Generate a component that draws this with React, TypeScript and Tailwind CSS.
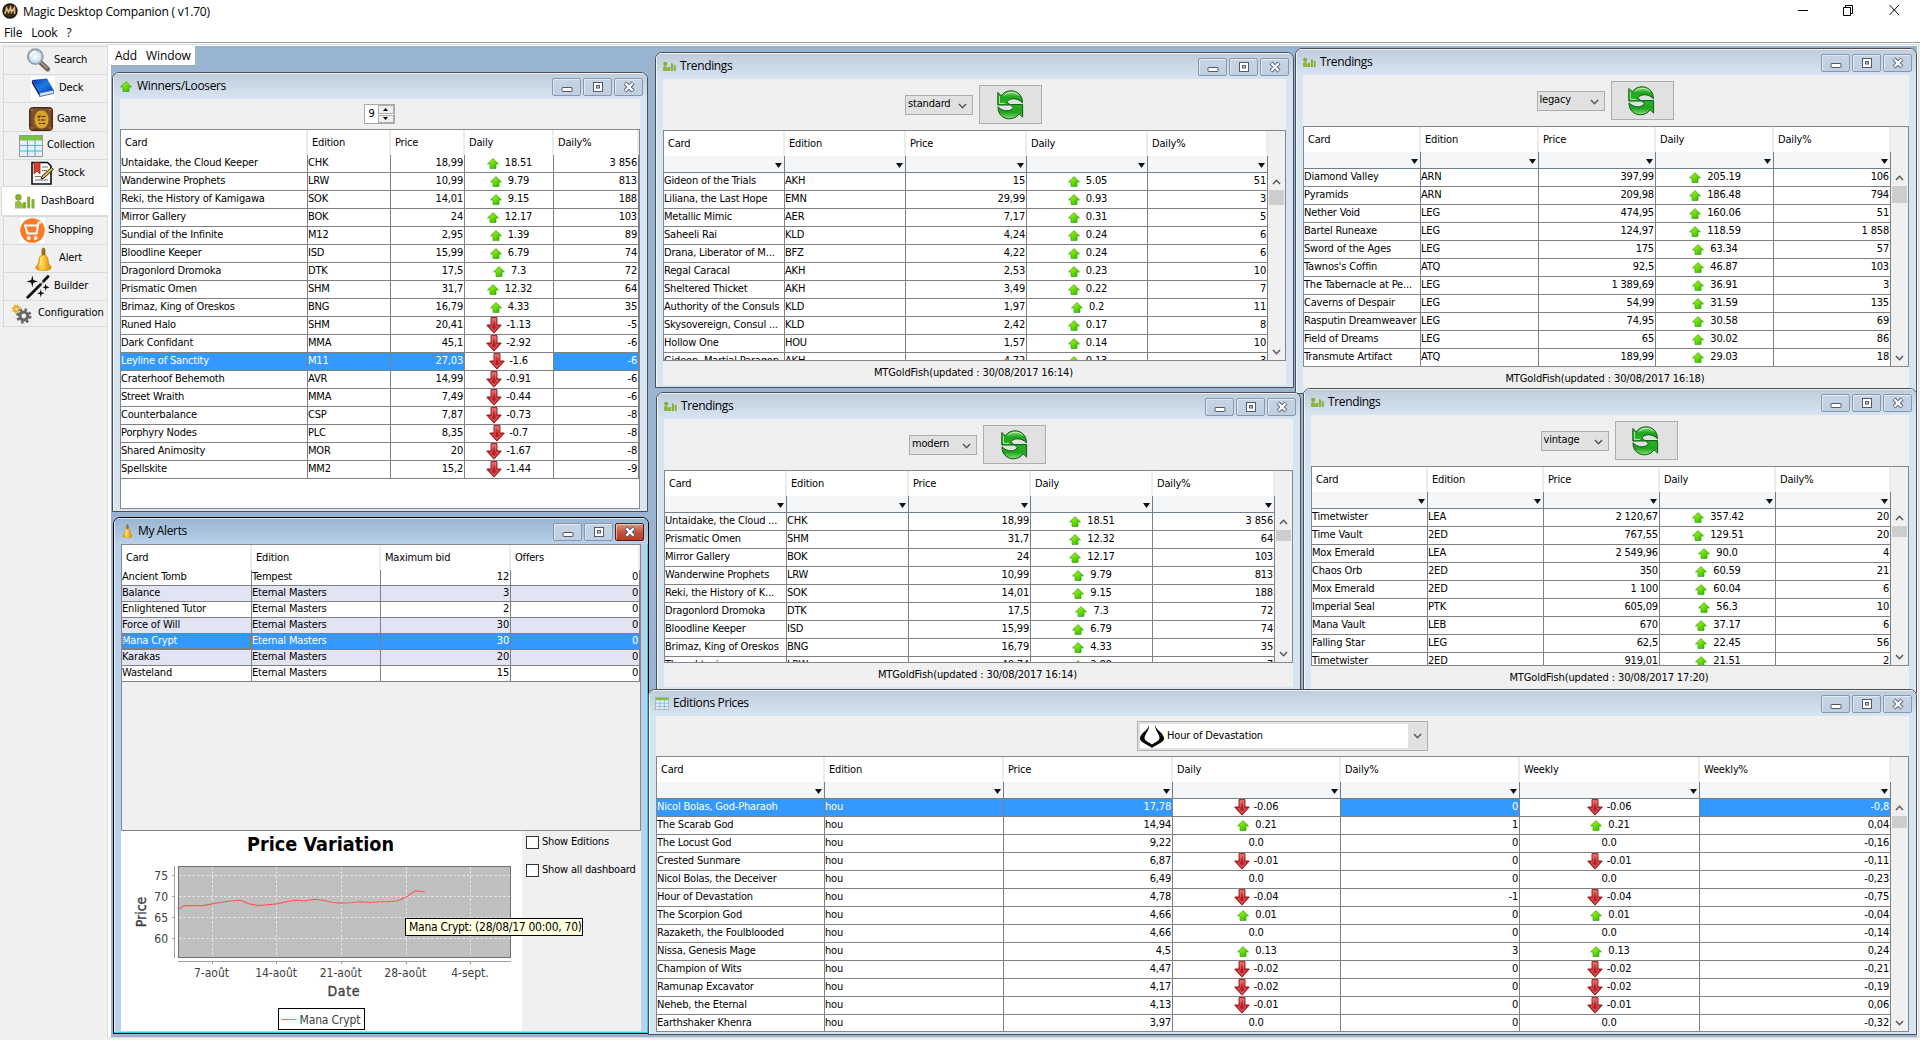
import React from "react";

type Row = string[];

const TAHOMA = "font-['DejaVu_Sans_Condensed','DejaVu_Sans',sans-serif] tracking-[-0.18px]";
const SEGOE = "font-['Open_Sans','Noto_Sans',sans-serif]";

/* ---------- shared gradients ---------- */

function Defs() {
  return (
    <svg className="absolute h-0 w-0" aria-hidden="true">
      <defs>
        <linearGradient id="up" x1="0" y1="0" x2="1" y2="1">
          <stop offset="0" stopColor="#b6f02c" />
          <stop offset="0.5" stopColor="#6fdc05" />
          <stop offset="1" stopColor="#1fae0a" />
        </linearGradient>
        <linearGradient id="down" x1="0" y1="0" x2="0" y2="1">
          <stop offset="0" stopColor="#f07a78" />
          <stop offset="0.5" stopColor="#b3151a" />
          <stop offset="1" stopColor="#c9474a" />
        </linearGradient>
        <linearGradient id="swirl" x1="0" y1="0" x2="0" y2="1">
          <stop offset="0" stopColor="#8edd7a" />
          <stop offset="0.45" stopColor="#1fa51f" />
          <stop offset="1" stopColor="#27b41f" />
        </linearGradient>
        <linearGradient id="book" x1="0" y1="0" x2="1" y2="1">
          <stop offset="0" stopColor="#0b2f9c" />
          <stop offset="0.5" stopColor="#1e7be6" />
          <stop offset="1" stopColor="#0a3cb0" />
        </linearGradient>
        <linearGradient id="gold" x1="0" y1="0" x2="1" y2="0">
          <stop offset="0" stopColor="#f08a00" />
          <stop offset="0.4" stopColor="#ffd84a" />
          <stop offset="1" stopColor="#d98200" />
        </linearGradient>
        <radialGradient id="lens">
          <stop offset="0" stopColor="#ffffff" />
          <stop offset="1" stopColor="#b5d8f3" />
        </radialGradient>
      </defs>
    </svg>
  );
}

/* ---------- icons ---------- */

const UpArrow = () => (
  <svg viewBox="0 0 12 11" className="h-[11px] w-3 shrink-0">
    <path d="M6 .6 11.5 5.9 H9 V10.4 H3 V5.9 H.5Z" fill="url(#up)" stroke="#2fa50d" strokeWidth=".7" />
  </svg>
);

const DownArrow = () => (
  <svg viewBox="0 0 16 17" className="h-[17px] w-4 shrink-0">
    <path d="M5 .6 H11 V8 H15.3 L8 16.2 .7 8 H5Z" fill="url(#down)" stroke="#a01d22" strokeWidth="1" />
    <path d="M6.3 2 V9.3 H4 L8 14 12 9.3 H9.7 V2" fill="none" stroke="#e88684" strokeWidth=".6" />
  </svg>
);

const BarsIcon = ({ className }: { className: string }) => (
  <svg viewBox="0 0 20 15" className={className}>
    <g fill="#86ae2f">
      <circle cx="3.4" cy="3.2" r="3.2" />
      <path d="M0 8 4 6 8 10 V14.5 H0Z" opacity=".85" />
      <rect x="8" y="8" width="3" height="6.5" rx="1" />
      <rect x="12.2" y="2.5" width="3" height="12" rx="1" />
      <rect x="16.5" y="5" width="3" height="9.5" rx="1" />
    </g>
  </svg>
);

const TableIcon = ({ className }: { className: string }) => (
  <svg viewBox="0 0 24 22" className={className} preserveAspectRatio="none">
    <rect x=".5" y=".5" width="23" height="21" fill="#e9eef2" stroke="#93999e" />
    <rect x="1" y="1" width="22" height="4.5" fill="#79c143" />
    <path d="M1 10.5H23 M1 16H23 M8.5 5.5V21 M16 5.5V21" stroke="#4db2e6" strokeWidth="1.1" />
  </svg>
);

const BellIcon = ({ className }: { className: string }) => (
  <svg viewBox="0 0 17 24" className={className}>
    <path d="M8.5 1 C10 1 10.3 3 10 8 H7 C6.7 3 7 1 8.5 1Z" fill="#a87412" stroke="#6e4a08" strokeWidth=".6" />
    <path d="M8.5 8 C4 8 4 12 3.6 15.5 C3.3 18 1 18.6 .8 20.4 C.8 22.6 4 23.4 8.5 23.4 S16.2 22.6 16.2 20.4 C16 18.6 13.7 18 13.4 15.5 C13 12 13 8 8.5 8Z" fill="url(#gold)" stroke="#b87400" strokeWidth=".6" />
    <path d="M6.4 11 C5.8 14 6 17 4.5 19" stroke="#fff3b0" strokeWidth="1.2" fill="none" />
  </svg>
);

const SearchIcon = () => (
  <svg viewBox="0 0 24 24" className="size-6">
    <path d="M14.5 14.5 21.5 21" stroke="#6d675f" strokeWidth="5" strokeLinecap="round" />
    <path d="M14.5 14 21 20" stroke="#a59d92" strokeWidth="1.6" strokeLinecap="round" />
    <circle cx="9.3" cy="8.6" r="7.4" fill="url(#lens)" stroke="#9aa0a6" strokeWidth="2" />
    <path d="M4.5 8 A5 5 0 0 1 9.5 3.6" stroke="#fff" strokeWidth="1.6" fill="none" />
  </svg>
);

const DeckIcon = () => (
  <svg viewBox="0 0 24 24" className="size-6">
    <rect width="24" height="24" fill="#fff" />
    <path d="M1 4 L16 2.6 22.6 14 8.6 17Z" fill="url(#book)" />
    <path d="M1 4 8.6 17 V20.5 L.8 7Z" fill="#08256f" />
    <path d="M8.6 17 22.6 14 V17.4 L8.6 20.6Z" fill="#d7e2f2" stroke="#123a9e" strokeWidth=".7" />
  </svg>
);

const GameIcon = () => (
  <svg viewBox="0 0 24 24" className="size-6">
    <rect x=".5" y=".5" width="23" height="23" rx="3" fill="#6b4326" stroke="#44290f" />
    <rect x="2.5" y="2" width="19" height="19" rx="2" fill="#7d5233" />
    <ellipse cx="12.5" cy="12.5" rx="7.5" ry="9.5" fill="#d9a52c" stroke="#8a5f14" />
    <path d="M8.5 9 10 10.4 11.4 8.4 M12.5 9.5H16.5 M9 13H11 M12 13H16 M10 16.5H12 M13 16.5H16" stroke="#3d270c" strokeWidth="1.2" fill="none" />
    <g fill="#e0662a">
      <circle cx="3" cy="3" r="1" />
      <circle cx="21" cy="3" r="1" />
      <circle cx="3" cy="21" r="1" />
      <circle cx="21" cy="21" r="1" />
    </g>
  </svg>
);

const StockIcon = () => (
  <svg viewBox="0 0 24 24" className="size-6">
    <path d="M2 1.5 H17.5 L21 5 V23 H2Z" fill="#f7f7f7" stroke="#111" strokeWidth="1.6" />
    <path d="M4 1.5 H10 V13 L7 10 4 13Z" fill="#d8452f" stroke="#8c1f12" strokeWidth=".7" />
    <path d="M12 6H18 M12 9.5H17 M5 15.5H11 M5 19H18" stroke="#777" strokeWidth="1" />
    <path d="M21.5 6.5 23.2 8.5 14 17 11.2 18 12 15.2Z" fill="#f2c23c" stroke="#111" strokeWidth="1" />
  </svg>
);

const CartIcon = () => (
  <svg viewBox="0 0 25 25" className="size-[25px] shrink-0">
    <rect width="25" height="25" fill="#fff" />
    <circle cx="12.5" cy="12.5" r="12.3" fill="#fb7a28" />
    <path d="M21 4.5 H18.5 L16.6 15.5 H7.5 L5 7.5 H17.5" fill="none" stroke="#fff" strokeWidth="2" strokeLinejoin="round" />
    <circle cx="8.8" cy="20" r="1.9" fill="#fff" />
    <circle cx="15.6" cy="20" r="1.9" fill="#fff" />
  </svg>
);

const WandIcon = () => (
  <svg viewBox="0 0 24 24" className="size-6">
    <path d="M1.8 22.2 14.5 9.5" stroke="#111" strokeWidth="2.8" strokeLinecap="round" />
    <path d="M17.5 6.2 22 1.6" stroke="#111" strokeWidth="2.8" strokeLinecap="round" />
    <path d="M15 9 17.2 6.6" stroke="#888" strokeWidth="1.6" />
    <path d="M6.3 .4 7.4 5 12 6.5 7.4 7.8 6.3 12.6 5.2 7.8 .6 6.5 5.2 5Z" fill="#111" />
    <path d="M19.8 8.5 20.5 11.3 23.8 12.3 20.5 13.2 19.8 16 19 13.2 16.4 12.3 19 11.3Z" fill="#111" />
    <path d="M14.8 14 15.6 17.2 18.8 18.2 15.6 19.2 14.8 22.6 14 19.2 11 18.2 14 17.2Z" fill="#111" />
  </svg>
);

const GearsIcon = () => (
  <svg viewBox="0 0 24 24" className="size-6">
    <circle cx="6.5" cy="7" r="2.3" fill="none" stroke="#f0a81c" strokeWidth="2" />
    <circle cx="6.5" cy="7" r="3.9" fill="none" stroke="#f0a81c" strokeWidth="1.4" strokeDasharray="1.55 1.51" />
    <circle cx="13.8" cy="14" r="4" fill="none" stroke="#686868" strokeWidth="3.2" />
    <circle cx="13.8" cy="14" r="6.4" fill="none" stroke="#686868" strokeWidth="2.6" strokeDasharray="2.5 2.526" />
  </svg>
);

const SWOOSH = "M.8 2.5 V15 H13.2 L10 11.8 C12.6 7.8 20.5 7.4 25.4 12.8 C25.6 5 20 .8 14 .8 C10 .8 6.5 2.6 4.3 5.8Z";

const RefreshIcon = () => (
  <svg viewBox="0 0 27 30" className="h-[30px] w-[27px]">
    <g fill="url(#swirl)" stroke="#0b5a14" strokeWidth="1" strokeLinejoin="round">
      <path d={SWOOSH} />
      <path d={SWOOSH} transform="rotate(180 13.2 14.8)" />
    </g>
    <path d="M2.4 6 V13.4 H8 M7 5.6 C10 1.6 18 1.4 22 5.4" stroke="#d9f7cf" strokeWidth="1" fill="none" opacity=".8" />
  </svg>
);

const SetIcon = () => (
  <svg viewBox="0 0 24 24" className="size-6 shrink-0">
    <path d="M9 .5 C9 6 0 9 0 14.5 C0 18.5 7 20 12 24 C17 20 24 18.5 24 14.5 C24 9 15.5 6 15 .5 C14.6 6 19.5 10 19.5 14 C19.5 17 15 18 12 20.5 C9 18 4.5 17 4.5 14 C4.5 10 10 6 9 .5Z" fill="#050505" />
  </svg>
);

const Chevron = ({ up = false, className = "" }: { up?: boolean; className?: string }) => (
  <svg viewBox="0 0 9 6" className={`h-1.5 w-[9px] ${className}`}>
    <path d={up ? "M1 5 4.5 1.2 8 5" : "M1 1 4.5 4.8 8 1"} fill="none" stroke="#555" strokeWidth={1.4} />
  </svg>
);

/* ---------- window frame ---------- */

function CaptionButton({ kind, hot }: { kind: "min" | "max" | "close"; hot?: boolean }) {
  return (
    <div
      className={`flex h-[18px] w-[29px] items-center justify-center rounded-[2px] border shadow-[inset_1px_1px_0_rgba(255,255,255,.5)] ${
        hot ? "border-[#5c1a18] bg-linear-to-b from-[#dd9487] via-[#c4543f] to-[#b83a22]" : "border-[#8598b0] bg-linear-to-b from-[#c6d4e3] to-[#bfd0e2]"
      }`}
    >
      <svg viewBox="0 0 12 12" className="size-3">
        {kind === "min" && <rect x="1" y="6.5" width="10" height="4" rx=".5" fill="#fff" stroke="#54586b" />}
        {kind === "max" && (
          <>
            <rect x="1.5" y="1.5" width="9" height="9" fill="#fff" stroke="#54586b" />
            <rect x="4.5" y="4.5" width="3" height="2.5" fill="#c6d4e3" stroke="#54586b" />
          </>
        )}
        {kind === "close" && (
          <>
            <path d="M2 2 10 10 M10 2 2 10" stroke="#54586b" strokeWidth="4" />
            <path d="M2.4 2.4 9.6 9.6 M9.6 2.4 2.4 9.6" stroke="#fff" strokeWidth="2.2" />
          </>
        )}
      </svg>
    </div>
  );
}

function Frame({
  place,
  title,
  icon,
  active,
  children,
}: {
  place: string;
  title: string;
  icon: React.ReactNode;
  active?: boolean;
  children: React.ReactNode;
}) {
  return (
    <section
      className={`absolute flex flex-col overflow-hidden rounded-t-[7px] border ${place} ${
        active
          ? "border-black bg-[#b9d1ea] shadow-[inset_-1px_-1px_0_#25cfe8,inset_1px_1px_0_#e8f2fb]"
          : "border-[#4b4e53] bg-[#d7e4f2] shadow-[inset_1px_1px_0_#f4f8fc]"
      }`}
    >
      <header
        className={`flex h-[26px] shrink-0 items-center bg-linear-to-b pr-1 pl-[5px] shadow-[inset_1px_1px_0_rgba(255,255,255,.7)] ${
          active ? "from-[#99b4d1] to-[#b9d1ea]" : "from-[#bfcddb] to-[#d7e4f2]"
        }`}
      >
        <span className="flex w-4 items-center justify-center">{icon}</span>
        <span className={`pb-px pl-[3px] text-[12px] tracking-[-0.36px] ${SEGOE}`}>{title}</span>
        <span className="ml-auto flex gap-0.5 pt-0.5">
          <CaptionButton kind="min" />
          <CaptionButton kind="max" />
          <CaptionButton kind="close" hot={active} />
        </span>
      </header>
      <div className="mx-[7px] mb-0.5 flex min-h-0 grow flex-col bg-[#f0f0f0]">{children}</div>
    </section>
  );
}

/* ---------- tables ---------- */

function Delta({ value }: { value: string }) {
  const flat = value === "0.0";
  return (
    <span className="flex grow items-center justify-center gap-1">
      {!flat && <span className="flex w-4 justify-center">{value.startsWith("-") ? <DownArrow /> : <UpArrow />}</span>}
      <span className="pb-px">{value}</span>
    </span>
  );
}

function Grid({
  cols,
  head,
  rows,
  selected = -1,
  filter,
  thumb,
  striped,
  focus,
  className,
}: {
  cols: string;
  head: string[];
  rows: Row[];
  selected?: number;
  filter?: boolean;
  thumb?: string;
  striped?: boolean;
  focus?: boolean;
  className: string;
}) {
  const isDelta = (i: number) => head[i] === "Daily" || head[i] === "Weekly";
  return (
    <div className={`flex overflow-hidden border border-[#828790] text-[11px] whitespace-nowrap ${className}`}>
      <div className="flex shrink-0 flex-col">
        <div className={`grid h-[25px] shrink-0 bg-white ${cols}`}>
          {head.map((h) => (
            <div key={h} className="border-r-2 border-b border-[#ececec] pl-1 leading-[25px]">
              {h}
            </div>
          ))}
        </div>
        {filter && (
          <div className={`grid h-[17px] shrink-0 bg-[#f5f6f7] ${cols}`}>
            {head.map((h) => (
              <div key={h} className="flex items-end justify-end border-r border-b border-[#6f7f8c] pr-0.5 pb-1">
                <svg viewBox="0 0 7 5" className="h-[5px] w-[7px]">
                  <path d="M0 0H7L3.5 5Z" fill="#111" />
                </svg>
              </div>
            ))}
          </div>
        )}
        {rows.map((row, r) => (
          <div key={r} className={`grid shrink-0 ${striped ? "h-4 leading-[14px]" : "h-[18px] leading-4"} ${cols}`}>
            {row.map((cell, c) => {
              const picked = r === selected && !isDelta(c);
              return (
                <div
                  key={c}
                  className={`flex overflow-hidden border-r border-b border-[#808080] pr-px ${
                    picked ? "bg-[#3399ff] text-white" : striped && r % 2 ? "bg-[#e0e4f3]" : "bg-white"
                  } ${c > 1 && !isDelta(c) ? "justify-end" : ""} ${focus && picked && c === 0 ? "outline-1 -outline-offset-2 outline-dotted outline-[#cc6600]" : ""}`}
                >
                  {isDelta(c) ? <Delta value={cell} /> : cell}
                </div>
              );
            })}
          </div>
        ))}
      </div>
      {thumb && (
        <div className="flex w-[17px] shrink-0 flex-col pt-[42px]">
          <div className="flex h-[17px] shrink-0 items-center justify-center">
            <Chevron up />
          </div>
          <div className={`w-[15px] self-center bg-[#cdcdcd] ${thumb}`} />
          <div className="mt-auto flex h-[17px] items-center justify-center">
            <Chevron />
          </div>
        </div>
      )}
    </div>
  );
}

function Trending({
  place,
  format,
  cols,
  rows,
  thumb,
  stamp,
  tableHeight,
}: {
  place: string;
  format: string;
  cols: string;
  rows: Row[];
  thumb: string;
  stamp: string;
  tableHeight: string;
}) {
  return (
    <Frame place={place} title="Trendings" icon={<BarsIcon className="h-[11px] w-[13px]" />}>
      <div className="flex h-[51px] shrink-0 items-center justify-center gap-1.5 pr-0.5">
        <div className="flex h-5 w-[68px] items-center justify-between border border-[#adadad] bg-[#e1e1e1] pr-[5px] pl-0.5 text-[11px]">
          <span className="pb-px">{format}</span>
          <Chevron className="mt-0.5" />
        </div>
        <div className="flex h-[39px] w-[63px] items-center justify-center border border-[#adadad] bg-[#e1e1e1] pr-px">
          <RefreshIcon />
        </div>
      </div>
      <Grid className={`shrink-0 ${tableHeight}`} cols={cols} head={HEAD5} rows={rows} filter thumb={thumb} />
      <div className="flex h-6 shrink-0 items-center justify-center pr-0.5 text-[11px] tracking-[-0.12px]">MTGoldFish(updated : {stamp})</div>
    </Frame>
  );
}

/* ---------- data ---------- */

const HEAD5 = ["Card", "Edition", "Price", "Daily", "Daily%"];

const WINNERS: Row[] = [
  ["Untaidake, the Cloud Keeper", "CHK", "18,99", "18.51", "3 856"],
  ["Wanderwine Prophets", "LRW", "10,99", "9.79", "813"],
  ["Reki, the History of Kamigawa", "SOK", "14,01", "9.15", "188"],
  ["Mirror Gallery", "BOK", "24", "12.17", "103"],
  ["Sundial of the Infinite", "M12", "2,95", "1.39", "89"],
  ["Bloodline Keeper", "ISD", "15,99", "6.79", "74"],
  ["Dragonlord Dromoka", "DTK", "17,5", "7.3", "72"],
  ["Prismatic Omen", "SHM", "31,7", "12.32", "64"],
  ["Brimaz, King of Oreskos", "BNG", "16,79", "4.33", "35"],
  ["Runed Halo", "SHM", "20,41", "-1.13", "-5"],
  ["Dark Confidant", "MMA", "45,1", "-2.92", "-6"],
  ["Leyline of Sanctity", "M11", "27,03", "-1.6", "-6"],
  ["Craterhoof Behemoth", "AVR", "14,99", "-0.91", "-6"],
  ["Street Wraith", "MMA", "7,49", "-0.44", "-6"],
  ["Counterbalance", "CSP", "7,87", "-0.73", "-8"],
  ["Porphyry Nodes", "PLC", "8,35", "-0.7", "-8"],
  ["Shared Animosity", "MOR", "20", "-1.67", "-8"],
  ["Spellskite", "MM2", "15,2", "-1.44", "-9"],
];

const ALERTS: Row[] = [
  ["Ancient Tomb", "Tempest", "12", "0"],
  ["Balance", "Eternal Masters", "3", "0"],
  ["Enlightened Tutor", "Eternal Masters", "2", "0"],
  ["Force of Will", "Eternal Masters", "30", "0"],
  ["Mana Crypt", "Eternal Masters", "30", "0"],
  ["Karakas", "Eternal Masters", "20", "0"],
  ["Wasteland", "Eternal Masters", "15", "0"],
];

const STANDARD: Row[] = [
  ["Gideon of the Trials", "AKH", "15", "5.05", "51"],
  ["Liliana, the Last Hope", "EMN", "29,99", "0.93", "3"],
  ["Metallic Mimic", "AER", "7,17", "0.31", "5"],
  ["Saheeli Rai", "KLD", "4,24", "0.24", "6"],
  ["Drana, Liberator of M...", "BFZ", "4,22", "0.24", "6"],
  ["Regal Caracal", "AKH", "2,53", "0.23", "10"],
  ["Sheltered Thicket", "AKH", "3,49", "0.22", "7"],
  ["Authority of the Consuls", "KLD", "1,97", "0.2", "11"],
  ["Skysovereign, Consul ...", "KLD", "2,42", "0.17", "8"],
  ["Hollow One", "HOU", "1,57", "0.14", "10"],
  ["Gideon, Martial Paragon", "AKH", "4,72", "0.13", "3"],
];

const LEGACY: Row[] = [
  ["Diamond Valley", "ARN", "397,99", "205.19", "106"],
  ["Pyramids", "ARN", "209,98", "186.48", "794"],
  ["Nether Void", "LEG", "474,95", "160.06", "51"],
  ["Bartel Runeaxe", "LEG", "124,97", "118.59", "1 858"],
  ["Sword of the Ages", "LEG", "175", "63.34", "57"],
  ["Tawnos's Coffin", "ATQ", "92,5", "46.87", "103"],
  ["The Tabernacle at Pe...", "LEG", "1 389,69", "36.91", "3"],
  ["Caverns of Despair", "LEG", "54,99", "31.59", "135"],
  ["Rasputin Dreamweaver", "LEG", "74,95", "30.58", "69"],
  ["Field of Dreams", "LEG", "65", "30.02", "86"],
  ["Transmute Artifact", "ATQ", "189,99", "29.03", "18"],
];

const MODERN: Row[] = [
  ["Untaidake, the Cloud ...", "CHK", "18,99", "18.51", "3 856"],
  ["Prismatic Omen", "SHM", "31,7", "12.32", "64"],
  ["Mirror Gallery", "BOK", "24", "12.17", "103"],
  ["Wanderwine Prophets", "LRW", "10,99", "9.79", "813"],
  ["Reki, the History of K...", "SOK", "14,01", "9.15", "188"],
  ["Dragonlord Dromoka", "DTK", "17,5", "7.3", "72"],
  ["Bloodline Keeper", "ISD", "15,99", "6.79", "74"],
  ["Brimaz, King of Oreskos", "BNG", "16,79", "4.33", "35"],
  ["Thoughtseize", "LRW", "40,74", "2.88", "7"],
];

const VINTAGE: Row[] = [
  ["Timetwister", "LEA", "2 120,67", "357.42", "20"],
  ["Time Vault", "2ED", "767,55", "129.51", "20"],
  ["Mox Emerald", "LEA", "2 549,96", "90.0", "4"],
  ["Chaos Orb", "2ED", "350", "60.59", "21"],
  ["Mox Emerald", "2ED", "1 100", "60.04", "6"],
  ["Imperial Seal", "PTK", "605,09", "56.3", "10"],
  ["Mana Vault", "LEB", "670", "37.17", "6"],
  ["Falling Star", "LEG", "62,5", "22.45", "56"],
  ["Timetwister", "2ED", "919,01", "21.51", "2"],
];

const EDITIONS: Row[] = [
  ["Nicol Bolas, God-Pharaoh", "hou", "17,78", "-0.06", "0", "-0.06", "-0,8"],
  ["The Scarab God", "hou", "14,94", "0.21", "1", "0.21", "0,04"],
  ["The Locust God", "hou", "9,22", "0.0", "0", "0.0", "-0,16"],
  ["Crested Sunmare", "hou", "6,87", "-0.01", "0", "-0.01", "-0,11"],
  ["Nicol Bolas, the Deceiver", "hou", "6,49", "0.0", "0", "0.0", "-0,23"],
  ["Hour of Devastation", "hou", "4,78", "-0.04", "-1", "-0.04", "-0,75"],
  ["The Scorpion God", "hou", "4,66", "0.01", "0", "0.01", "-0,04"],
  ["Razaketh, the Foulblooded", "hou", "4,66", "0.0", "0", "0.0", "-0,14"],
  ["Nissa, Genesis Mage", "hou", "4,5", "0.13", "3", "0.13", "0,24"],
  ["Champion of Wits", "hou", "4,47", "-0.02", "0", "-0.02", "-0,21"],
  ["Ramunap Excavator", "hou", "4,17", "-0.02", "0", "-0.02", "-0,19"],
  ["Neheb, the Eternal", "hou", "4,13", "-0.01", "0", "-0.01", "0,06"],
  ["Earthshaker Khenra", "hou", "3,97", "0.0", "0", "0.0", "-0,32"],
];

/* Daily prices starting on 3 August. */
const PRICES = [
  66.6, 67.9, 67.9, 67.9, 68.3, 68.7, 69, 69.2, 68.3, 67.9, 68.1, 68.3, 68.8, 69.2, 69, 69.4, 69.2, 68.65, 68.5, 68.6,
  68.8, 68.65, 68.8, 68.8, 69, 70, 71.4, 71.2,
];

/* ---------- price chart ---------- */

function PriceChart() {
  const points = PRICES.map((p, i) => `${(54.2 + i * 9.25).toFixed(1)},${(65.8 - (p - 70) * 4.2).toFixed(1)}`).join(" ");
  return (
    <svg viewBox="0 0 401 200" className="h-[200px] w-[401px] shrink-0 bg-white tracking-normal" fill="#404040">
      <text x="199.5" y="20" textAnchor="middle" fontSize="19" fontWeight="700" fill="#000" textLength="147" lengthAdjust="spacingAndGlyphs">
        Price Variation
      </text>
      <rect x="57.5" y="35.5" width="332" height="91" fill="#c0c0c0" stroke="#707070" />
      <g stroke="#e6e6e6" strokeDasharray="2.5 2">
        {[44.5, 65.5, 86.5, 107.5].map((y) => (
          <path key={y} d={`M58 ${y}H389`} />
        ))}
        {[91.5, 155.5, 220.5, 285.5, 349.5].map((x) => (
          <path key={x} d={`M${x} 36V126`} />
        ))}
      </g>
      <path d="M53.5 35V127 M57 130.5H390 M51 44.5H53 M51 65.5H53 M51 86.5H53 M51 107.5H53 M91.5 131V133 M155.5 131V133 M220.5 131V133 M285.5 131V133 M349.5 131V133" stroke="#a0a0a0" fill="none" />
      <clipPath id="plot">
        <rect x="58" y="36" width="331" height="90" />
      </clipPath>
      <polyline points={points} clipPath="url(#plot)" fill="none" stroke="#ff5555" strokeWidth="1.1" />
      <g fontSize="12">
        {["75", "70", "65", "60"].map((t, i) => (
          <text key={t} x="47" y={48.5 + i * 21} textAnchor="end">
            {t}
          </text>
        ))}
        {["7-août", "14-août", "21-août", "28-août", "4-sept."].map((t, i) => (
          <text key={t} x={90.5 + i * 64.6} y="145.5" textAnchor="middle">
            {t}
          </text>
        ))}
      </g>
      <g fontSize="14" stroke="#404040" strokeWidth=".35">
        <text x="222.5" y="164.5" textAnchor="middle" textLength="32">
          Date
        </text>
        <text transform="translate(25 81) rotate(-90)" textAnchor="middle">
          Price
        </text>
      </g>
      <rect x="157.5" y="177.5" width="86" height="21" fill="#fff" stroke="#000" />
      <path d="M160.5 188.5H175.5" stroke="#ff6b6b" />
      <text x="178.5" y="192.5" fontSize="12" textLength="61">
        Mana Crypt
      </text>
    </svg>
  );
}

/* ---------- side tabs ---------- */

const TABS: { label: string; icon: React.ReactNode; box: string }[] = [
  { label: "Search", icon: <SearchIcon />, box: "h-[28px] pl-[22px] pb-px" },
  { label: "Deck", icon: <DeckIcon />, box: "h-[28px] pl-[27px] pb-px" },
  { label: "Game", icon: <GameIcon />, box: "h-[29px] pl-[25px] pt-1" },
  { label: "Collection", icon: <TableIcon className="h-[22px] w-6" />, box: "h-[28px] pl-[15px]" },
  { label: "Stock", icon: <StockIcon />, box: "h-[27px] pl-[26px]" },
  { label: "DashBoard", icon: <BarsIcon className="h-[15px] w-5" />, box: "h-[30px] pl-[11px]" },
  { label: "Shopping", icon: <CartIcon />, box: "h-[28px] pl-[16px]" },
  { label: "Alert", icon: <BellIcon className="h-6 w-[17px]" />, box: "h-[28px] pl-[27px]" },
  { label: "Builder", icon: <WandIcon />, box: "h-[28px] pl-[22px]" },
  { label: "Configuration", icon: <GearsIcon />, box: "h-[27px] pl-[6px]" },
];

function SideTabs() {
  return (
    <nav className="flex w-[107px] shrink-0 flex-col pt-0.5">
      {TABS.map(({ label, icon, box }) => (
        <div
          key={label}
          className={`flex items-center text-[11px] tracking-[-0.12px] ${box} ${
            label === "DashBoard" ? "z-10 -mr-px ml-px border-y border-l border-[#dcdcdc] bg-white" : "ml-[3px] border-t border-l border-[#d9d9d9] last:border-b"
          }`}
        >
          <span className="flex w-6 shrink-0 justify-center">{icon}</span>
          <span className="pl-1">{label}</span>
        </div>
      ))}
    </nav>
  );
}

/* ---------- application ---------- */

export default function App() {
  return (
    <div className={`flex h-[1040px] w-[1920px] flex-col overflow-hidden bg-[#f0f0f0] text-black ${TAHOMA}`}>
      <Defs />
      <div className={`flex h-[24px] shrink-0 items-center bg-white pl-0.5 ${SEGOE}`}>
        <svg viewBox="0 0 16 16" className="mb-0.5 size-4">
          <circle cx="8" cy="8" r="7.7" fill="#1d150c" />
          <circle cx="8" cy="8" r="6.2" fill="#3d2d18" />
          <path d="M3 11 4.6 5 6.5 9 8.6 4.4 9.4 9 12.4 4.8 12.6 11" fill="none" stroke="#d9b77c" strokeWidth="1.6" />
        </svg>
        <span className="pl-[5px] text-[12px] tracking-[-0.2px]">Magic Desktop Companion ( v1.70)</span>
        <div className="ml-auto flex items-center pr-5">
          <svg viewBox="0 0 102 12" className="mb-1 h-3 w-[102px]" fill="none" stroke="#000">
            <path d="M0 6.5H10" />
            <path d="M45.5 3.5H52.5V11.5H45.5Z M47.5 3.5V1.5H54.5V9.5H52.5" />
            <path d="M91.5 1 101 11 M101 1 91.5 11" />
          </svg>
        </div>
      </div>
      <div className={`flex h-[19px] shrink-0 gap-[9px] border-b border-[#a0a0a0] bg-white pl-1 text-[12px] leading-[18px] tracking-[-0.2px] ${SEGOE}`}>
        <span>File</span>
        <span>Look</span>
        <span>?</span>
      </div>
      <div className="h-px shrink-0 bg-white" />

      <div className="flex h-[994px] shrink-0">
        <SideTabs />
        <main className="mr-px flex min-w-0 grow border border-[#dcdcdc] bg-white pt-px pr-px pl-[3px]">
          <div className="relative h-[991px] grow overflow-hidden bg-[#99b4d1]">
            <div className={`flex h-5 w-[84px] items-center gap-[9px] border-b border-[#a0a0a0] bg-white pl-1 text-[12px] tracking-[-0.1px] ${SEGOE}`}>
              <span>Add</span>
              <span>Window</span>
            </div>

            <Frame place="left-px top-[26px] h-[440px] w-[536px]" title="Winners/Loosers" icon={<UpArrow />}>
              <div className="flex h-[30px] shrink-0 justify-center pt-[5px] pr-0.5">
                <div className="flex h-5 w-[31px] border border-[#ababab] bg-white">
                  <span className="w-[13px] pt-px pl-1 text-[11px]">9</span>
                  <div className="flex grow flex-col gap-px">
                    <div className="flex grow items-center justify-center border border-[#acacac] bg-[#f0f0f0]">
                      <svg viewBox="0 0 5 3" className="h-[3px] w-[5px]">
                        <path d="M0 3H5L2.5 0Z" />
                      </svg>
                    </div>
                    <div className="flex grow items-center justify-center border border-[#acacac] bg-[#f0f0f0]">
                      <svg viewBox="0 0 5 3" className="h-[3px] w-[5px]">
                        <path d="M0 0H5L2.5 3Z" />
                      </svg>
                    </div>
                  </div>
                </div>
              </div>
              <Grid className="h-[380px] bg-white" cols="grid-cols-[187px_83px_74px_89px_85px]" head={HEAD5} rows={WINNERS} selected={11} />
            </Frame>

            <Trending
              place="left-[544px] top-[6px] h-[336px] w-[639px]"
              format="standard"
              cols="grid-cols-[121px_121px_121px_121px_120px]"
              rows={STANDARD}
              thumb="h-[15px]"
              stamp="30/08/2017 16:14"
              tableHeight="h-[231px]"
            />
            <Trending
              place="left-[1184px] top-[2px] h-[346px] w-[622px]"
              format="legacy"
              cols="grid-cols-[117px_118px_117px_118px_117px]"
              rows={LEGACY}
              thumb="h-[17px]"
              stamp="30/08/2017 16:18"
              tableHeight="h-[241px]"
            />
            <Trending
              place="left-[545px] top-[346px] h-[298px] w-[645px]"
              format="modern"
              cols="grid-cols-[122px_122px_122px_122px_122px]"
              rows={MODERN}
              thumb="h-[11px]"
              stamp="30/08/2017 16:14"
              tableHeight="h-[193px]"
            />
            <Trending
              place="left-[1192px] top-[342px] h-[305px] w-[614px]"
              format="vintage"
              cols="grid-cols-[116px_116px_116px_116px_115px]"
              rows={VINTAGE}
              thumb="h-[11px]"
              stamp="30/08/2017 17:20"
              tableHeight="h-[200px]"
            />

            <Frame place="left-[2px] top-[471px] h-[517px] w-[536px]" title="My Alerts" icon={<BellIcon className="h-[14px] w-[11px]" />} active>
              <Grid
                className="h-[287px] shrink-0"
                cols="grid-cols-[130px_129px_130px_129px]"
                head={["Card", "Edition", "Maximum bid", "Offers"]}
                rows={ALERTS}
                selected={4}
                striped
                focus
              />
              <div className="flex h-[200px]">
                <PriceChart />
                <div className="flex flex-col gap-[15px] pt-[5px] pl-1 text-[11px]">
                  {["Show Editions", "Show all dashboard"].map((t) => (
                    <label key={t} className="flex h-[13px] items-center gap-[3px] whitespace-nowrap">
                      <span className="size-[13px] border border-[#333] bg-white" />
                      {t}
                    </label>
                  ))}
                </div>
              </div>
            </Frame>
            <div className="absolute top-[872px] left-[294px] z-20 h-[18px] w-[178px] border border-black bg-[#ffffe1] pl-[3px] text-[12px] leading-4 tracking-[-0.27px] whitespace-nowrap">
              Mana Crypt: (28/08/17 00:00, 70)
            </div>

            <Frame place="left-[537px] top-[643px] h-[346px] w-[1269px]" title="Editions Prices" icon={<TableIcon className="h-[13px] w-[14px]" />}>
              <div className="flex h-10 shrink-0 items-center justify-center">
                <div className="flex h-[30px] w-[291px] items-center border border-[#adadad] bg-[#e1e1e1] pl-0.5 text-[11px]">
                  <span className="flex h-6 w-[268px] items-center gap-[3px] bg-white">
                    <SetIcon />
                    Hour of Devastation
                  </span>
                  <Chevron className="ml-[5px]" />
                </div>
              </div>
              <Grid
                className="h-[276px] shrink-0"
                cols="grid-cols-[168px_179px_169px_168px_179px_180px_191px]"
                head={["Card", "Edition", "Price", "Daily", "Daily%", "Weekly", "Weekly%"]}
                rows={EDITIONS}
                selected={0}
                filter
                thumb="h-3"
              />
            </Frame>
          </div>
        </main>
      </div>
    </div>
  );
}
